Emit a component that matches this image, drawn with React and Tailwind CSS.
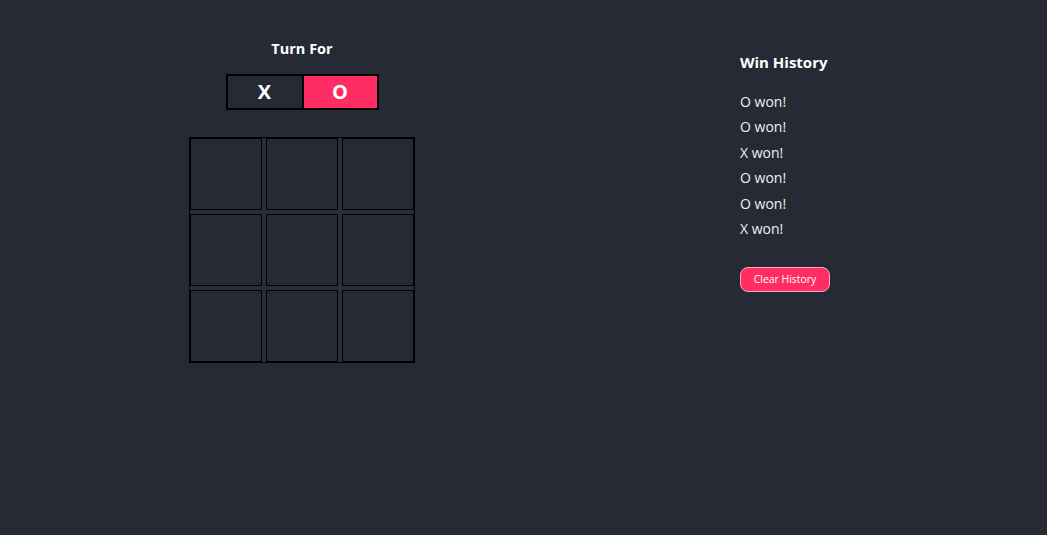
import React, { useState } from "react";

const HISTORY = ["O won!", "O won!", "X won!", "O won!", "O won!", "X won!"];

function Cell({ value, onClick }) {
  return (
    <button
      onClick={onClick}
      className="flex h-[72px] w-[72px] items-center justify-center border border-black bg-[#262a35] text-3xl font-bold text-white"
    >
      {value}
    </button>
  );
}

export default function App() {
  const [board, setBoard] = useState(Array(9).fill(null));
  const [turn, setTurn] = useState("O");
  const [history, setHistory] = useState(HISTORY);

  function play(i) {
    if (board[i]) return;
    const next = board.slice();
    next[i] = turn;
    setBoard(next);
    setTurn(turn === "X" ? "O" : "X");
  }

  return (
    <div
      className="flex min-h-[535px] w-full bg-[#262a35] text-white"
      style={{ fontFamily: '"Open Sans", "Noto Sans", sans-serif' }}
    >
      <div className="ml-[189px] flex w-[226px] flex-col items-center pt-[39px]">
        <h2 className="text-[14.5px] font-bold leading-[19px]">Turn For</h2>
        <div className="mt-[16px] flex border border-black">
          <div
            className={
              "flex h-[34px] w-[76px] items-center justify-center border border-black text-[20px] font-bold " +
              (turn === "X" ? "bg-[#ff2d64]" : "bg-[#262a35]")
            }
          >
            X
          </div>
          <div
            className={
              "flex h-[34px] w-[75px] items-center justify-center border border-black text-[20px] font-bold " +
              (turn === "O" ? "bg-[#ff2d64]" : "bg-[#262a35]")
            }
          >
            O
          </div>
        </div>
        <div className="mt-[27px] grid grid-cols-3 gap-[4px] border border-black bg-[#2a2e39]">
          {board.map((v, i) => (
            <Cell key={i} value={v} onClick={() => play(i)} />
          ))}
        </div>
      </div>

      <div className="ml-[325px] flex flex-col pt-[52px]">
        <h2 className="text-[15px] font-bold leading-[20px]">Win History</h2>
        <ul className="mt-[17px] flex flex-col text-[14px] text-[#eef0f5]">
          {history.map((h, i) => (
            <li key={i} className="leading-[25.4px]">
              {h}
            </li>
          ))}
        </ul>
        <button
          onClick={() => setHistory([])}
          className="mt-[26px] h-[25px] w-[90px] rounded-lg border border-[#f3a9bd] bg-[#ff2d64] text-[10.4px] text-white"
        >
          Clear History
        </button>
      </div>
    </div>
  );
}
